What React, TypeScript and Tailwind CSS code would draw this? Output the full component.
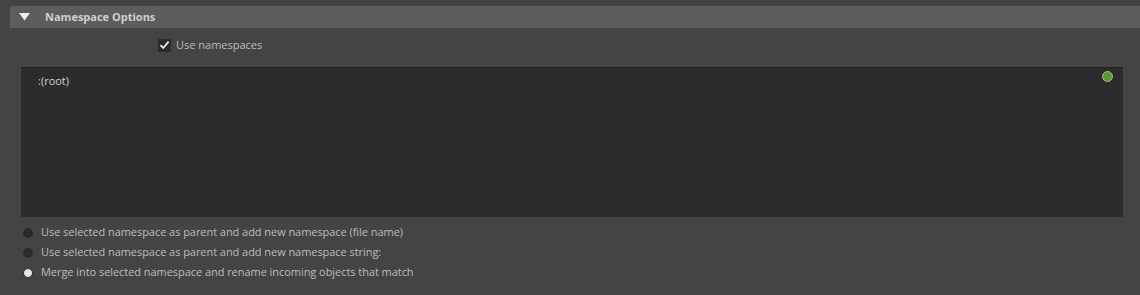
import React from "react";

const options = [
  { label: "Use selected namespace as parent and add new namespace (file name)", on: false },
  { label: "Use selected namespace as parent and add new namespace string:", on: false },
  { label: "Merge into selected namespace and rename incoming objects that match", on: true },
];

export default function App() {
  return (
    <div
      className="w-[1140px] h-[295px] bg-[#444444] pt-[6px] text-[11px] text-[#bdbdbd]"
      style={{ fontFamily: '"Open Sans", "DejaVu Sans", sans-serif' }}
    >
      {/* frame header */}
      <div className="ml-[10px] h-[22px] bg-[#5d5d5d] flex items-center rounded-tl-[2px]">
        <svg width="11" height="8" viewBox="0 0 11 8" className="ml-[9px]">
          <path d="M0 0 H11 L5.5 7.5 Z" fill="#eeeeee" />
        </svg>
        <span className="ml-[15px] font-bold text-[#cfcfcf] text-[11px]">Namespace Options</span>
      </div>

      {/* use namespaces */}
      <div className="flex items-center h-[26px] mt-[4px] pl-[158px]">
        <div className="w-[13px] h-[13px] bg-[#2b2b2b] flex items-center justify-center">
          <svg width="11" height="10" viewBox="0 0 11 10">
            <path d="M1.5 5.2 L4.2 8 L9.6 1.6" fill="none" stroke="#eeeeee" strokeWidth="1.8" />
          </svg>
        </div>
        <span className="ml-[5px]">Use namespaces</span>
      </div>

      {/* namespace tree */}
      <div className="ml-[21px] mt-[9px] w-[1102px] h-[150px] bg-[#2b2b2b] border-t border-[#222222] flex items-start justify-between">
        <span className="ml-[17px] mt-[5px] text-[#cfcfcf]">:(root)</span>
        <div className="mt-[3px] mr-[10px] w-[11px] h-[11px] rounded-full bg-[#5a9a33] border border-[#9bbf86]" />
      </div>

      {/* radio options */}
      <div className="mt-[6px] flex flex-col gap-[1px] pl-[23px]">
        {options.map((o) => (
          <div key={o.label} className="flex items-center h-[19px]">
            <div
              className={
                o.on
                  ? "w-[10px] h-[10px] rounded-full bg-[#e6e6e6] border border-[#2a2a2a]"
                  : "w-[10px] h-[10px] rounded-full bg-[#2a2a2a]"
              }
            />
            <span className="ml-[8px] tracking-[-0.05px]">{o.label}</span>
          </div>
        ))}
      </div>
    </div>
  );
}
